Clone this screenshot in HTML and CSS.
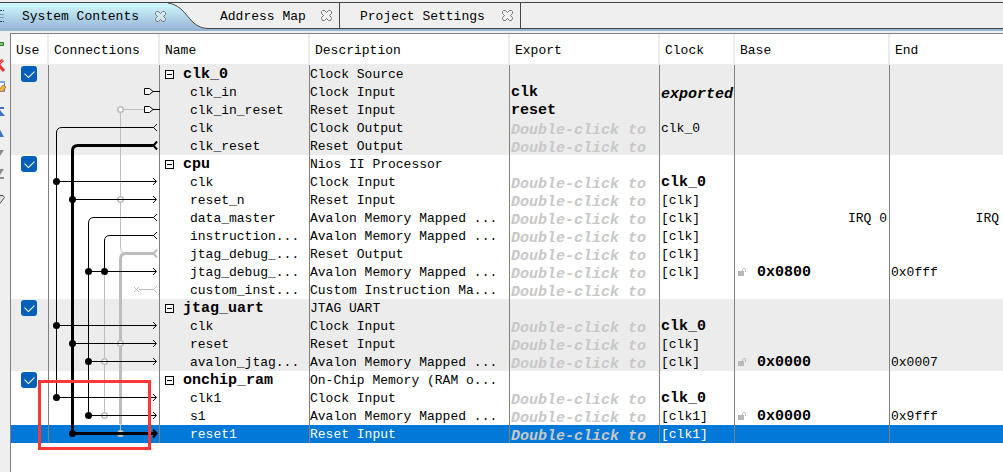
FILE: index.html
```
<!DOCTYPE html>
<html lang="en">
<head>
<meta charset="utf-8">
<title>System Contents</title>
<link rel="stylesheet" href="styles.css">
</head>
<body>
<svg width="0" height="0" class="defs" aria-hidden="true">
  <defs>
    <symbol id="close" viewBox="0 0 11 11"><path d="M1.5.5h2l2 2 2-2h2l1 1v2l-2 2 2 2v1l-1 2h-2l-2-2-2 2h-2l-1-2v-1l2-2-2-2v-2z" fill="#f4f4f4" fill-opacity=".5" stroke="#777" stroke-width="1"/></symbol>
    <symbol id="lock" viewBox="0 0 8 8"><path d="M0 3h6v5H0z" fill="#b8b8b8"/><path d="M4.500 3V1.500L5.500.5H7l.5 1V4" fill="none" stroke="#b8b8b8"/></symbol>
    <linearGradient id="sky" x1="0" y1="0" x2="0" y2="28" gradientUnits="userSpaceOnUse"><stop offset="0" stop-color="#d0fcff"/><stop offset="1" stop-color="#94b0d3"/></linearGradient>
  </defs>
</svg>
<div class="app">
  <nav class="tabs">
    <button class="tab active" type="button">
      <svg class="tab-icon" width="5" height="14" viewBox="0 0 5 14"><path d="M0 1.500h4M0 12.500h4" stroke="#245" stroke-dasharray="2 1"/><path d="M0 5.500h4M0 8.500h4" stroke="#89a"/></svg>
      <span>System Contents</span><svg class="close"><use href="#close"/></svg>
    </button>
    <svg class="slope" width="40" height="28" viewBox="0 0 40 28"><path d="M0 0C20 3 20 25 40 25.500H40V0z" fill="#efefef"/><path d="M0 0C20 3 20 25 40 25.500V28H0z" fill="url(#sky)"/><path d="M0 0C20 3 20 25 40 25.500" fill="none" stroke="#444" stroke-width="1"/></svg>
    <button class="tab address" type="button"><span>Address Map</span><svg class="close"><use href="#close"/></svg></button>
    <button class="tab project" type="button"><span>Project Settings</span><svg class="close"><use href="#close"/></svg></button>
    <div class="tab-rest"></div>
  </nav>
  <div class="body">
    <aside class="tools">
      <button type="button" aria-label="Add"><svg viewBox="0 0 10 21"><path d="M-4 8.500h7.500v3H-4z" fill="#7fc97f" stroke="#2c7a2c"/></svg></button>
      <button type="button" aria-label="Remove"><svg viewBox="0 0 10 21"><path d="M-3 10L3 5M-2 9L4 16" stroke="#e33" stroke-width="3"/><path d="M-2 10L3 5" stroke="#f88"/></svg></button>
      <button type="button" aria-label="Edit"><svg viewBox="0 0 10 21"><path d="M-3 5.500h7.500v10H-3z" fill="#fff" stroke="#5b83b5"/><path d="M-3 5h8v2h-8z" fill="#79a7df"/><path d="M-1 14l4-5 3 2-4 5z" fill="#f7b64a" stroke="#bd7b22"/></svg></button>
      <button class="gap" type="button" aria-label="Move to top"><svg viewBox="0 0 10 21"><path d="M-3 6h7v2h-7zM-6 15L0 9l5 6z" fill="#3f74cc"/></svg></button>
      <button type="button" aria-label="Move up"><svg viewBox="0 0 10 21"><path d="M-5 15L-1 6l5 9z" fill="#3f74cc"/></svg></button>
      <button type="button" aria-label="Move down"><svg viewBox="0 0 10 21"><path d="M-5 7h9l-4 6z" fill="#8c8c8c"/></svg></button>
      <button type="button" aria-label="Move to bottom"><svg viewBox="0 0 10 21"><path d="M-5 5h9l-4 6zM-4 13h8v2h-8z" fill="#8c8c8c"/></svg></button>
      <button class="gap" type="button" aria-label="Filter"><svg viewBox="0 0 10 21"><path d="M-3 6.500h6l1.500 2-5 6.500" fill="#ddd" stroke="#555"/></svg></button>
    </aside>
    <main class="panel">
      <table class="system">
        <colgroup><col class="c-use"><col class="c-conn"><col class="c-name"><col class="c-desc"><col class="c-export"><col class="c-clock"><col class="c-base"><col></colgroup>
        <thead><tr><th>Use</th><th>Connections</th><th>Name</th><th>Description</th><th>Export</th><th>Clock</th><th>Base</th><th>End</th></tr></thead>
        <tbody class="shade">
          <tr><td class="use"><input type="checkbox" checked aria-label="Use clk_0"></td><td></td><td class="module"><button type="button" class="fold" aria-label="Collapse clk_0"></button>clk_0</td><td>Clock Source</td><td></td><td></td><td></td><td></td></tr>
          <tr><td></td><td></td><td class="port">clk_in</td><td>Clock Input</td><td class="set">clk</td><td class="set low">exported</td><td></td><td></td></tr>
          <tr><td></td><td></td><td class="port">clk_in_reset</td><td>Reset Input</td><td class="set">reset</td><td></td><td></td><td></td></tr>
          <tr><td></td><td></td><td class="port">clk</td><td>Clock Output</td><td class="hint low">Double-click to</td><td class="val">clk_0</td><td></td><td></td></tr>
          <tr><td></td><td></td><td class="port">clk_reset</td><td>Reset Output</td><td class="hint low">Double-click to</td><td></td><td></td><td></td></tr>
        </tbody>
        <tbody>
          <tr><td class="use"><input type="checkbox" checked aria-label="Use cpu"></td><td></td><td class="module"><button type="button" class="fold" aria-label="Collapse cpu"></button>cpu</td><td>Nios II Processor</td><td></td><td></td><td></td><td></td></tr>
          <tr><td></td><td></td><td class="port">clk</td><td>Clock Input</td><td class="hint low">Double-click to</td><td class="set">clk_0</td><td></td><td></td></tr>
          <tr><td></td><td></td><td class="port">reset_n</td><td>Reset Input</td><td class="hint low">Double-click to</td><td class="val">[clk]</td><td></td><td></td></tr>
          <tr><td></td><td></td><td class="port">data_master</td><td>Avalon Memory Mapped ...</td><td class="hint low">Double-click to</td><td class="val">[clk]</td><td class="irq">IRQ 0</td><td class="irq last">IRQ</td></tr>
          <tr><td></td><td></td><td class="port">instruction...</td><td>Avalon Memory Mapped ...</td><td class="hint low">Double-click to</td><td class="val">[clk]</td><td></td><td></td></tr>
          <tr><td></td><td></td><td class="port">jtag_debug_...</td><td>Reset Output</td><td class="hint low">Double-click to</td><td class="val">[clk]</td><td></td><td></td></tr>
          <tr><td></td><td></td><td class="port">jtag_debug_...</td><td>Avalon Memory Mapped ...</td><td class="hint low">Double-click to</td><td class="val">[clk]</td><td class="base"><svg class="lock"><use href="#lock"/></svg>0x0800</td><td class="val">0x0fff</td></tr>
          <tr><td></td><td></td><td class="port">custom_inst...</td><td>Custom Instruction Ma...</td><td class="hint low">Double-click to</td><td></td><td></td><td></td></tr>
        </tbody>
        <tbody class="shade">
          <tr><td class="use"><input type="checkbox" checked aria-label="Use jtag_uart"></td><td></td><td class="module"><button type="button" class="fold" aria-label="Collapse jtag_uart"></button>jtag_uart</td><td>JTAG UART</td><td></td><td></td><td></td><td></td></tr>
          <tr><td></td><td></td><td class="port">clk</td><td>Clock Input</td><td class="hint low">Double-click to</td><td class="set">clk_0</td><td></td><td></td></tr>
          <tr><td></td><td></td><td class="port">reset</td><td>Reset Input</td><td class="hint low">Double-click to</td><td class="val">[clk]</td><td></td><td></td></tr>
          <tr><td></td><td></td><td class="port">avalon_jtag...</td><td>Avalon Memory Mapped ...</td><td class="hint low">Double-click to</td><td class="val">[clk]</td><td class="base"><svg class="lock"><use href="#lock"/></svg>0x0000</td><td class="val">0x0007</td></tr>
        </tbody>
        <tbody>
          <tr><td class="use"><input type="checkbox" checked aria-label="Use onchip_ram"></td><td></td><td class="module"><button type="button" class="fold" aria-label="Collapse onchip_ram"></button>onchip_ram</td><td>On-Chip Memory (RAM o...</td><td></td><td></td><td></td><td></td></tr>
          <tr><td></td><td></td><td class="port">clk1</td><td>Clock Input</td><td class="hint low">Double-click to</td><td class="set">clk_0</td><td></td><td></td></tr>
          <tr><td></td><td></td><td class="port">s1</td><td>Avalon Memory Mapped ...</td><td class="hint low">Double-click to</td><td class="val">[clk1]</td><td class="base"><svg class="lock"><use href="#lock"/></svg>0x0000</td><td class="val">0x9fff</td></tr>
          <tr class="selected"><td></td><td></td><td class="port">reset1</td><td>Reset Input</td><td class="hint low">Double-click to</td><td class="val">[clk1]</td><td></td><td></td></tr>
        </tbody>
      </table>
      <svg class="wires" width="112" height="378" viewBox="48 65 112 378" fill="none" stroke="#000" aria-hidden="true">
        <g stroke="#bdbdbd">
          <path d="M120.500 109.500H144M120.500 109.500V247q0 4 3 6"/>
          <path d="M104.500 271.500V415.500M120.500 424V433.500"/>
          <path d="M120.500 424V259q0-5.500 5.500-5.500H154" stroke-width="3"/>
          <path d="M157 249.500l-3.500 4 3.500 4" stroke-width="2"/>
          <path d="M134 287l5 5M139 287l-5 5M139 289.500h15M157 286l-3.500 3.500 3.500 3.500"/>
          <g fill="#fff" stroke-width="1.500">
            <circle cx="120.500" cy="109.500" r="2.800"/><circle cx="120.500" cy="199.500" r="2.800"/><circle cx="120.500" cy="343.500" r="2.800"/>
            <circle cx="120.500" cy="433.500" r="2.800"/><circle cx="104.500" cy="361.500" r="2.800"/><circle cx="104.500" cy="415.500" r="2.800"/>
          </g>
        </g>
        <path d="M144.500 88.500h5l3.500 3-3.500 3h-5zM144.500 106.500h5l3.500 3-3.500 3h-5z" fill="#fff"/>
        <path d="M153 91.500h7M153 109.500h7"/>
        <path d="M56.500 397.500V133q0-5.500 5.500-5.500H154M88.500 415.500V223q0-5.500 5.500-5.500H154M104.500 271.500V241q0-5.500 5.500-5.500H154"/>
        <path d="M157 124l-3.500 3.500 3.500 3.500M157 214l-3.500 3.500 3.500 3.500M157 232l-3.500 3.500 3.500 3.500"/>
        <path d="M72.500 433.500V151q0-5.500 5.500-5.500H154M72.500 433.500H156" stroke-width="3"/>
        <path d="M157 141.500l-3.500 4 3.500 4M153 429.500l3.500 4-3.500 4" stroke-width="2"/>
        <path d="M56.500 181.500H156M72.500 199.500H156M88.500 271.500H156M56.500 325.500H156M72.500 343.500H156M88.500 361.500H156M56.500 397.500H156M88.500 415.500H156"/>
        <path d="M153 178l3.500 3.500-3.500 3.500M153 196l3.500 3.500-3.500 3.500M153 268l3.500 3.500-3.500 3.500M153 322l3.500 3.500-3.500 3.500M153 340l3.500 3.500-3.500 3.500M153 358l3.500 3.500-3.500 3.500M153 394l3.500 3.500-3.500 3.500M153 412l3.500 3.500-3.500 3.500"/>
        <g fill="#000" stroke="none">
          <circle cx="56.500" cy="181.500" r="3.500"/><circle cx="72.500" cy="199.500" r="3.500"/><circle cx="88.500" cy="271.500" r="3.500"/><circle cx="104.500" cy="271.500" r="3.500"/>
          <circle cx="56.500" cy="325.500" r="3.500"/><circle cx="72.500" cy="343.500" r="3.500"/><circle cx="88.500" cy="361.500" r="3.500"/>
          <circle cx="56.500" cy="397.500" r="3.500"/><circle cx="88.500" cy="415.500" r="3.500"/><circle cx="72.500" cy="433.500" r="3.500"/>
        </g>
      </svg>
      <div class="marker"></div>
    </main>
  </div>
</div>
</body>
</html>
```
FILE: styles.css
```
* { box-sizing: border-box; }
body {
  margin: 0;
  background: #efefef;
  color: #000;
  font: 13px/12px "Liberation Mono", monospace;
}
button { font: inherit; color: inherit; padding: 0; margin: 0; border: 0; background: none; }
.defs { position: absolute; }
.app { display: flex; flex-direction: column; min-height: 100vh; overflow: hidden; }

.tabs {
  display: flex;
  align-items: flex-start;
  height: 29px;
  margin: 2px 0;
  border-top: 1px solid #444;
  background: linear-gradient(#efefef 26px, #9bb5d6 26px);
}
.tab {
  display: flex;
  align-items: center;
  justify-content: space-between;
  height: 26px;
  border-right: 1px solid #444;
  border-bottom: 1px solid #444;
  white-space: nowrap;
}
.tab span { padding-top: 2px; }
.tab.active {
  width: 168px;
  height: 28px;
  padding: 0 2px 2px 0;
  border: 0;
  background: linear-gradient(#d0fcff, #94b0d3);
}
.tab.active span { margin-right: auto; margin-left: 17px; }
.tab.address { width: 132px; padding: 0 7px 0 12px; }
.tab.project { width: 181px; padding: 0 7px 0 20px; }
.tab-rest { flex: 1; height: 26px; border-bottom: 1px solid #444; }
.slope { display: block; flex: none; }
.close { width: 11px; height: 11px; flex: none; }

.body { display: flex; flex: 1; }
.tools { flex: none; width: 10px; padding-top: 1px; overflow: hidden; }
.tools button { display: block; width: 10px; height: 21px; }
.tools svg { display: block; width: 10px; height: 21px; }
.tools .gap { margin-top: 4px; }

.panel {
  position: relative;
  flex: 1;
  min-width: 0;
  border-top: 1px solid #7f7f88;
  border-left: 1px solid #7f7f88;
  background: #fff;
}
.system { width: 100%; table-layout: fixed; border-collapse: separate; border-spacing: 0; }
.c-use { width: 38px; }
.c-conn { width: 111px; }
.c-name { width: 150px; }
.c-desc { width: 200px; }
.c-export { width: 150px; }
.c-clock { width: 75px; }
.c-base { width: 155px; }
th {
  height: 31px;
  padding: 4px 0 0 5px;
  border-right: 2px solid #ececec;
  border-bottom: 1px solid #ececec;
  font-weight: normal;
  text-align: left;
}
td {
  height: 18px;
  padding: 4px 0 2px;
  border-right: 1px solid #808080;
  white-space: nowrap;
}
th:last-child, td:last-child { border-right: 0; }
.shade td { background: #ececec; }
.selected td { background: #0078d7; color: #fff; }
td.use { padding: 1px 0 1px 10px; }
td.port { padding-left: 30px; }
td.module { padding-left: 5px; font-size: 15px; font-weight: bold; }
td.set, td.hint, td.base { font-size: 15px; font-weight: bold; }
td.set, td.hint, td.val { padding-left: 1px; }
td.low { padding-top: 6px; padding-bottom: 0; font-style: italic; }
td.hint, .selected td.hint { color: #c8c8c8; }
td.base { padding-left: 3px; }
td.irq { padding-right: 2px; text-align: right; }
td.last { padding-right: 4px; }

.use input {
  display: grid;
  place-items: center;
  appearance: none;
  width: 16px;
  height: 16px;
  margin: 0;
  border-radius: 3px;
  background: #005fb8;
}
.use input:checked::after {
  content: "";
  width: 8px;
  height: 5px;
  margin-bottom: 3px;
  border: solid #fff;
  border-width: 0 0 1px 1px;
  transform: rotate(-45deg);
}
.fold {
  width: 9px;
  height: 9px;
  margin-right: 9px;
  border: 1px solid #000;
  background: linear-gradient(#000, #000) center / 5px 1px no-repeat #fff;
}
.lock { width: 8px; height: 8px; margin-right: 11px; }
.wires { position: absolute; left: 37px; top: 31px; }
.marker {
  position: absolute;
  left: 27px;
  top: 346px;
  width: 113px;
  height: 70px;
  border: 3px solid #ff3636;
}
```
